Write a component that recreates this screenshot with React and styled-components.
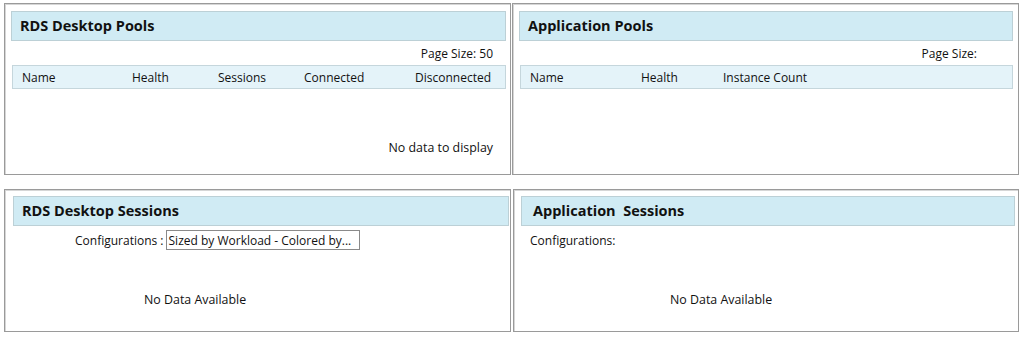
import React from 'react'
import styled, { createGlobalStyle } from 'styled-components'

const Global = createGlobalStyle`
    body {
        margin: 0;
        background: #fff;
        font-family: "Open Sans", "Noto Sans", sans-serif;
        color: #111;
    }
`
const Page = styled.div`
    width: 1025px;
    height: 338px;
    padding: 3px 0 0 4px;
    box-sizing: border-box;
    display: flex;
    flex-direction: column;
    gap: 14px;
`
const Row = styled.div`
    display: flex;
    gap: ${p => p.gap}px;
`
const Panel = styled.div`
    width: ${p => p.w}px;
    height: ${p => p.h}px;
    box-sizing: border-box;
    border: 1px solid #9a9a9a;
    box-shadow: inset 1px 1px 0 #d6d6d6;
    padding: ${p => p.pad};
    display: flex;
    flex-direction: column;
`
const Header = styled.div`
    height: 30px;
    box-sizing: border-box;
    background: #d0ebf4;
    border: 1px solid #bcd0d6;
    display: flex;
    align-items: center;
    padding: 0 0 2px ${p => p.indent || 8}px;
    font-size: 14.5px;
    font-weight: 700;
    white-space: pre;
`
const PageSize = styled.div`
    height: 24px;
    display: flex;
    align-items: center;
    justify-content: flex-end;
    padding-right: ${p => p.right}px;
    font-size: 12px;
`
const TableHead = styled.div`
    height: 24px;
    box-sizing: border-box;
    margin-left: 1px;
    background: #e4f3f9;
    border: 1px solid #c5d6dc;
    display: grid;
    grid-template-columns: ${p => p.cols};
    align-items: center;
    padding-left: 9px;
    font-size: 12px;
`
const Empty = styled.div`
    flex: 1;
    display: flex;
    align-items: center;
    justify-content: flex-end;
    padding: 32px 13px 0 0;
    font-size: 12.4px;
`
const ConfigRow = styled.div`
    display: flex;
    align-items: center;
    height: 22px;
    margin-top: 3px;
    padding-left: ${p => p.left}px;
    font-size: 12px;
    gap: 2px;
`
const Select = styled.div`
    width: 194px;
    height: 20px;
    box-sizing: border-box;
    border: 1px solid #8a8a8a;
    display: flex;
    align-items: center;
    padding-left: 2px;
    white-space: nowrap;
`
const NoData = styled.div`
    flex: 1;
    display: flex;
    align-items: center;
    padding-left: ${p => p.left}px;
    padding-top: 16px;
    font-size: 12.4px;
`

function App() {
  return (
    <Page>
        <Global />
        <Row gap={1}>
            <Panel w={507} h={172} pad="7px 4px 0 6px">
                <Header>RDS Desktop Pools</Header>
                <PageSize right={13}>Page Size: 50</PageSize>
                <TableHead cols="110px 86px 86px 111px 1fr">
                    <span>Name</span>
                    <span>Health</span>
                    <span>Sessions</span>
                    <span>Connected</span>
                    <span>Disconnected</span>
                </TableHead>
                <Empty>No data to display</Empty>
            </Panel>
            <Panel w={507} h={172} pad="7px 5px 0 6px">
                <Header>Application Pools</Header>
                <PageSize right={36}>Page Size:</PageSize>
                <TableHead cols="111px 82px 1fr">
                    <span>Name</span>
                    <span>Health</span>
                    <span>Instance Count</span>
                </TableHead>
            </Panel>
        </Row>
        <Row gap={2}>
            <Panel w={507} h={143} pad="6px 1px 0 8px">
                <Header>RDS Desktop Sessions</Header>
                <ConfigRow left={62}>
                    <span>Configurations :</span>
                    <Select>Sized by Workload - Colored by...</Select>
                </ConfigRow>
                <NoData left={131}>No Data Available</NoData>
            </Panel>
            <Panel w={506} h={143} pad="6px 3px 0 7px">
                <Header indent={11}>Application  Sessions</Header>
                <ConfigRow left={9}>
                    <span>Configurations:</span>
                </ConfigRow>
                <NoData left={149}>No Data Available</NoData>
            </Panel>
        </Row>
    </Page>
  )
}

export default App
